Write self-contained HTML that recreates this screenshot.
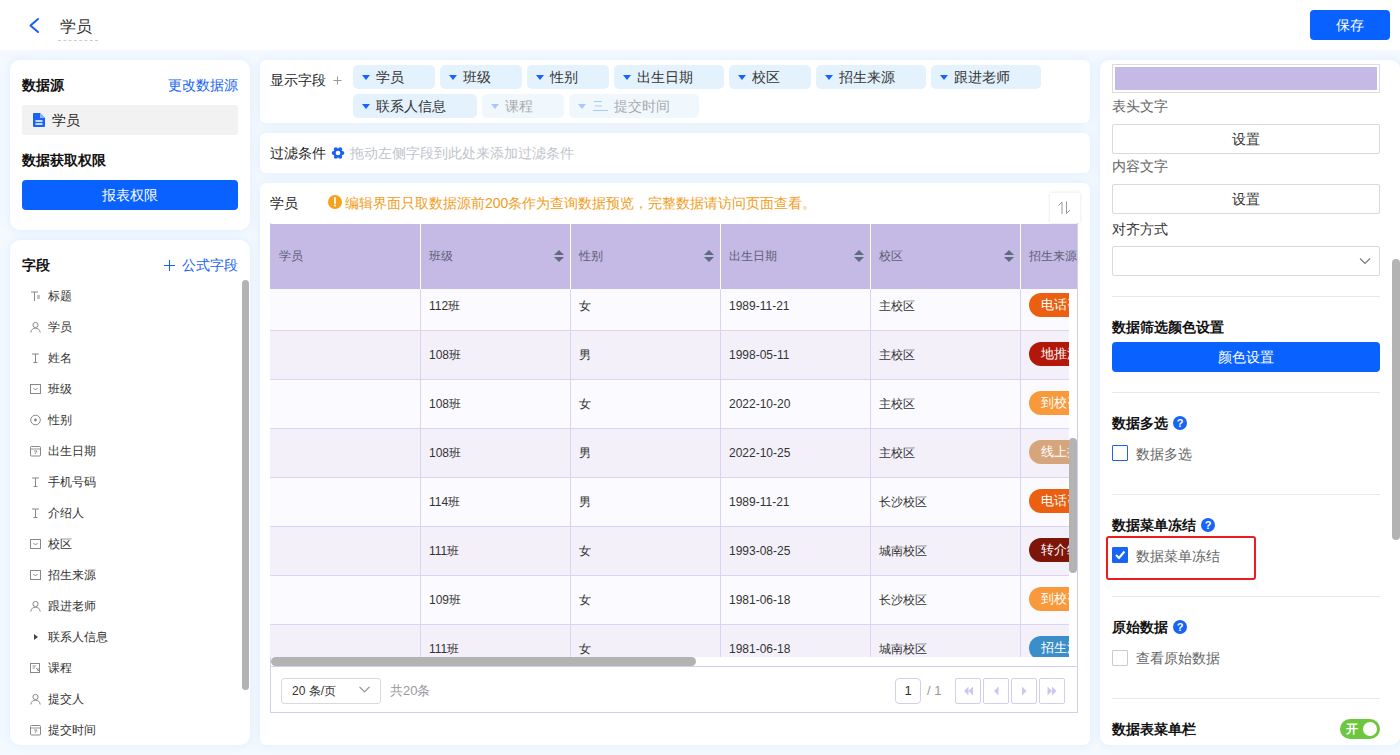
<!DOCTYPE html>
<html><head><meta charset="utf-8">
<style>
*{box-sizing:border-box;margin:0;padding:0}
html,body{width:1400px;height:755px;overflow:hidden}
body{font-family:"Liberation Sans",sans-serif;font-size:14px;color:#262626;background:#f3f9ff;position:relative}
.abs{position:absolute}
.hdr{left:0;top:0;width:1400px;height:50px;background:#fff}
.panel{position:absolute;background:#fff;border-radius:10px;box-shadow:0 0 8px rgba(200,223,250,.45)}
.t{position:absolute;white-space:nowrap;line-height:20px}
.b{font-weight:bold;color:#111}
.blue{color:#1763f3}
.btn{position:absolute;background:#0962ff;color:#fff;border-radius:4px;text-align:center}
.fl{font-size:12px;color:#333}
.tag{position:absolute;height:24px;background:#e4f2fd;border-radius:5px}
.tag span{position:absolute;left:23px;top:2px;line-height:20px;white-space:nowrap;color:#333}
.tag .tri{position:absolute;left:9px;top:10px;width:0;height:0;border-left:4.5px solid transparent;border-right:4.5px solid transparent;border-top:5px solid #1664ff}
.tag.fade{background:#f0f8fe}
.tag.fade span{color:#aaa}
.tag.fade .tri{border-top-color:#a9c8fb}
.row{position:absolute;left:0;width:799px;height:49px;border-bottom:1px solid #ddd3f1}
.cell{position:absolute;top:0;width:150px;height:48px;border-left:1px solid #ddd3f1;padding-left:8px;line-height:48px;font-size:12px;color:#333;white-space:nowrap}
.pill{display:inline-block;height:24px;line-height:24px;border-radius:12px;padding:0 12px;color:#fff;font-size:13px;vertical-align:middle;margin-top:-3px;white-space:nowrap}
.thead{position:absolute;width:807px;height:65px;background:#c5b9e6;overflow:hidden}
.th{position:absolute;top:0;width:150px;height:65px;border-left:1px solid #fff;padding-left:8px;line-height:65px;font-size:12px;color:#5a6072;white-space:nowrap}
.sort{position:absolute;right:6px;top:26px;width:10px;height:14px}
.sort:before{content:"";position:absolute;left:0;top:0;border-left:5px solid transparent;border-right:5px solid transparent;border-bottom:5px solid #5f6b80}
.sort:after{content:"";position:absolute;left:0;top:7px;border-left:5px solid transparent;border-right:5px solid transparent;border-top:5px solid #5f6b80}
.rl{position:absolute;left:1112px;line-height:20px;white-space:nowrap}
.obtn{position:absolute;left:1112px;width:268px;height:30px;border:1px solid #d9d9d9;border-radius:2px;text-align:center;line-height:28px;color:#333;background:#fff}
.div{position:absolute;left:1112px;width:268px;height:1px;background:#e8e8e8}
.q{position:absolute;width:14px;height:14px;border-radius:50%;background:#1764f5;color:#fff;font-size:11px;font-weight:bold;line-height:14px;text-align:center}
.cb{position:absolute;left:1112px;width:16px;height:16px;border:1px solid #1764f5;border-radius:1px;background:#fff}
</style></head>
<body>
<!-- header -->
<div class="abs hdr"></div>
<svg class="abs" style="left:27px;top:16px" width="14" height="19" viewBox="0 0 14 19"><path d="M11 3 L3.5 9.5 L11 16" fill="none" stroke="#1b5cf6" stroke-width="2" stroke-linecap="round" stroke-linejoin="round"/></svg>
<div class="t" style="left:60px;top:17px;font-size:16px;line-height:20px;color:#333">学员</div>
<div class="abs" style="left:58px;top:40px;width:40px;border-top:1px dashed #ccc"></div>
<div class="btn" style="left:1310px;top:10px;width:80px;height:30px;line-height:30px;font-size:14px">保存</div>

<!-- left panel 1 -->
<div class="panel" style="left:10px;top:60px;width:240px;height:170px"></div>
<div class="t b" style="left:22px;top:75px">数据源</div>
<div class="t blue" style="right:1162px;top:75px">更改数据源</div>
<div class="abs" style="left:22px;top:105px;width:216px;height:30px;background:#f2f2f2;border-radius:2px"></div>
<svg class="abs" style="left:33px;top:113px" width="12" height="14" viewBox="0 0 12 14"><path d="M0 1a1 1 0 0 1 1-1H7L12 5V13a1 1 0 0 1-1 1H1a1 1 0 0 1-1-1Z" fill="#1a63f5"/><path d="M7 0V5H12" fill="#8fb5fb"/><path d="M2.5 8H9.5M2.5 11H9.5" stroke="#fff" stroke-width="1.3"/></svg>
<div class="t" style="left:52px;top:110px">学员</div>
<div class="t b" style="left:22px;top:150px">数据获取权限</div>
<div class="btn" style="left:22px;top:180px;width:216px;height:30px;line-height:30px">报表权限</div>

<!-- left panel 2 -->
<div class="panel" style="left:10px;top:240px;width:240px;height:505px"></div>
<div class="t b" style="left:22px;top:255px">字段</div>
<div class="t blue" style="right:1162px;top:255px"><svg style="position:relative;top:1px;margin-right:7px" width="11" height="11" viewBox="0 0 11 11"><path d="M5.5 0V11M0 5.5H11" stroke="#1763f3" stroke-width="1.1"/></svg>公式字段</div>
<svg class="abs" style="left:30px;top:290px" width="12" height="12" viewBox="0 0 12 12"><path d="M1 2H8M4.5 2V11" stroke="#888" stroke-width="1" fill="none"/><path d="M7 6H10M7 8H10" stroke="#888" stroke-width="1"/></svg>
<div class="t fl" style="left:48px;top:286px">标题</div>
<svg class="abs" style="left:30px;top:321px" width="12" height="12" viewBox="0 0 12 12"><circle cx="5.5" cy="4" r="2.6" stroke="#888" stroke-width="1" fill="none"/><path d="M0.8 11.5C1.2 8.5 3 7.2 5.5 7.2S9.8 8.5 10.2 11.5" stroke="#888" stroke-width="1" fill="none"/></svg>
<div class="t fl" style="left:48px;top:317px">学员</div>
<svg class="abs" style="left:30px;top:352px" width="12" height="12" viewBox="0 0 12 12"><path d="M2 2H9M5.5 2V10.5M3.5 10.5H7.5" stroke="#888" stroke-width="1" fill="none"/></svg>
<div class="t fl" style="left:48px;top:348px">姓名</div>
<svg class="abs" style="left:30px;top:383px" width="12" height="12" viewBox="0 0 12 12"><rect x="0.5" y="1.5" width="10" height="9" stroke="#888" stroke-width="1" fill="none"/><path d="M3.5 5L5.5 7L7.5 5" stroke="#888" stroke-width="1" fill="none"/></svg>
<div class="t fl" style="left:48px;top:379px">班级</div>
<svg class="abs" style="left:30px;top:414px" width="12" height="12" viewBox="0 0 12 12"><circle cx="5.5" cy="6" r="4.8" stroke="#888" stroke-width="1" fill="none"/><circle cx="5.5" cy="6" r="1.4" fill="#888"/></svg>
<div class="t fl" style="left:48px;top:410px">性别</div>
<svg class="abs" style="left:30px;top:445px" width="12" height="12" viewBox="0 0 12 12"><rect x="0.5" y="1.5" width="10" height="9.5" rx="1" stroke="#888" stroke-width="1" fill="none"/><path d="M0.5 4H10.5M4 6H7L5 9" stroke="#888" stroke-width="0.9" fill="none"/></svg>
<div class="t fl" style="left:48px;top:441px">出生日期</div>
<svg class="abs" style="left:30px;top:476px" width="12" height="12" viewBox="0 0 12 12"><path d="M2 2H9M5.5 2V10.5M3.5 10.5H7.5" stroke="#888" stroke-width="1" fill="none"/></svg>
<div class="t fl" style="left:48px;top:472px">手机号码</div>
<svg class="abs" style="left:30px;top:507px" width="12" height="12" viewBox="0 0 12 12"><path d="M2 2H9M5.5 2V10.5M3.5 10.5H7.5" stroke="#888" stroke-width="1" fill="none"/></svg>
<div class="t fl" style="left:48px;top:503px">介绍人</div>
<svg class="abs" style="left:30px;top:538px" width="12" height="12" viewBox="0 0 12 12"><rect x="0.5" y="1.5" width="10" height="9" stroke="#888" stroke-width="1" fill="none"/><path d="M3.5 5L5.5 7L7.5 5" stroke="#888" stroke-width="1" fill="none"/></svg>
<div class="t fl" style="left:48px;top:534px">校区</div>
<svg class="abs" style="left:30px;top:569px" width="12" height="12" viewBox="0 0 12 12"><rect x="0.5" y="1.5" width="10" height="9" stroke="#888" stroke-width="1" fill="none"/><path d="M3.5 5L5.5 7L7.5 5" stroke="#888" stroke-width="1" fill="none"/></svg>
<div class="t fl" style="left:48px;top:565px">招生来源</div>
<svg class="abs" style="left:30px;top:600px" width="12" height="12" viewBox="0 0 12 12"><circle cx="5.5" cy="4" r="2.6" stroke="#888" stroke-width="1" fill="none"/><path d="M0.8 11.5C1.2 8.5 3 7.2 5.5 7.2S9.8 8.5 10.2 11.5" stroke="#888" stroke-width="1" fill="none"/></svg>
<div class="t fl" style="left:48px;top:596px">跟进老师</div>
<svg class="abs" style="left:30px;top:631px" width="12" height="12" viewBox="0 0 12 12"><path d="M4 3L8 6L4 9Z" fill="#444"/></svg>
<div class="t fl" style="left:48px;top:627px">联系人信息</div>
<svg class="abs" style="left:30px;top:662px" width="12" height="12" viewBox="0 0 12 12"><rect x="0.5" y="1.5" width="9" height="9" stroke="#888" stroke-width="1" fill="none"/><path d="M2.5 4H6M2.5 6H5M6 6L10 10M8 6V9" stroke="#888" stroke-width="0.9" fill="none"/></svg>
<div class="t fl" style="left:48px;top:658px">课程</div>
<svg class="abs" style="left:30px;top:693px" width="12" height="12" viewBox="0 0 12 12"><circle cx="5.5" cy="4" r="2.6" stroke="#888" stroke-width="1" fill="none"/><path d="M0.8 11.5C1.2 8.5 3 7.2 5.5 7.2S9.8 8.5 10.2 11.5" stroke="#888" stroke-width="1" fill="none"/></svg>
<div class="t fl" style="left:48px;top:689px">提交人</div>
<svg class="abs" style="left:30px;top:724px" width="12" height="12" viewBox="0 0 12 12"><rect x="0.5" y="1.5" width="10" height="9.5" rx="1" stroke="#888" stroke-width="1" fill="none"/><path d="M0.5 4H10.5M4 6H7L5 9" stroke="#888" stroke-width="0.9" fill="none"/></svg>
<div class="t fl" style="left:48px;top:720px">提交时间</div>
<div class="abs" style="left:242px;top:280px;width:7px;height:410px;background:#b3b3b3;border-radius:4px"></div>

<!-- middle panels -->
<div class="panel" style="left:260px;top:60px;width:830px;height:63px;border-radius:6px"></div>
<div class="t" style="left:270px;top:70px">显示字段</div>
<svg class="abs" style="left:333px;top:76px" width="9" height="9" viewBox="0 0 9 9"><path d="M4.5 0.5V8.5M0.5 4.5H8.5" stroke="#999" stroke-width="1"/></svg>
<div class="tag" style="left:353px;top:65px;width:82px"><i class="tri"></i><span>学员</span></div>
<div class="tag" style="left:440px;top:65px;width:82px"><i class="tri"></i><span>班级</span></div>
<div class="tag" style="left:527px;top:65px;width:82px"><i class="tri"></i><span>性别</span></div>
<div class="tag" style="left:614px;top:65px;width:110px"><i class="tri"></i><span>出生日期</span></div>
<div class="tag" style="left:729px;top:65px;width:82px"><i class="tri"></i><span>校区</span></div>
<div class="tag" style="left:816px;top:65px;width:110px"><i class="tri"></i><span>招生来源</span></div>
<div class="tag" style="left:931px;top:65px;width:110px"><i class="tri"></i><span>跟进老师</span></div>
<div class="tag" style="left:353px;top:94px;width:124px"><i class="tri"></i><span>联系人信息</span></div>
<div class="tag fade" style="left:482px;top:94px;width:82px"><i class="tri"></i><span>课程</span></div>
<div class="tag fade" style="left:569px;top:94px;width:130px"><i class="tri"></i><svg style="position:absolute;left:23px;top:6px" width="17" height="12" viewBox="0 0 17 12"><path d="M2 1.5H10M3 6H10M1 10.5H16" stroke="#a9c8fb" stroke-width="1.2"/></svg><span style="left:45px">提交时间</span></div>
<div class="panel" style="left:260px;top:133px;width:830px;height:40px;border-radius:6px"></div>
<div class="t" style="left:270px;top:143px">过滤条件</div>
<svg class="abs" style="left:331px;top:146px" width="14" height="14" viewBox="0 0 14 14"><g fill="#1a5ff6"><circle cx="11.30" cy="7.00" r="2"/><circle cx="9.15" cy="10.72" r="2"/><circle cx="4.85" cy="10.72" r="2"/><circle cx="2.70" cy="7.00" r="2"/><circle cx="4.85" cy="3.28" r="2"/><circle cx="9.15" cy="3.28" r="2"/><circle cx="7" cy="7" r="4.6"/></g><circle cx="7" cy="7" r="2.3" fill="#fff"/></svg>
<div class="t" style="left:350px;top:143px;color:#c0c4cc">拖动左侧字段到此处来添加过滤条件</div>
<div class="panel" style="left:260px;top:183px;width:830px;height:562px;border-radius:6px"></div>
<div class="t" style="left:270px;top:193px">学员</div>
<svg class="abs" style="left:328px;top:195px" width="14" height="14" viewBox="0 0 14 14"><circle cx="7" cy="7" r="7" fill="#f7a21b"/><path d="M7 3V8" stroke="#fff" stroke-width="1.8" stroke-linecap="round"/><circle cx="7" cy="10.6" r="1" fill="#fff"/></svg>
<div class="t" style="left:345px;top:193px;color:#f29d1c">编辑界面只取数据源前200条作为查询数据预览，完整数据请访问页面查看。</div>
<div class="abs" style="left:1050px;top:193px;width:30px;height:30px;background:#fff;box-shadow:0 0 3px rgba(0,0,0,.12)"></div>
<svg class="abs" style="left:1057px;top:200px" width="16" height="15" viewBox="0 0 16 15"><path d="M5 14V2L1.5 5.5M9.5 1.5V13.5L13 10" stroke="#999" stroke-width="1" fill="none"/></svg>
<div class="abs" style="left:270px;top:223px;width:808px;height:490px;border:1px solid #d6ccef;border-top:none"></div>
<div class="abs" style="left:270px;top:224px;width:799px;height:433px;overflow:hidden">
<div class="row" style="top:58px;background:#fbfafe">
<div class="cell" style="left:0px;border-left:none;"></div>
<div class="cell" style="left:150px;">112班</div>
<div class="cell" style="left:300px;">女</div>
<div class="cell" style="left:450px;">1989-11-21</div>
<div class="cell" style="left:600px;">主校区</div>
<div class="cell" style="left:750px;width:49px;overflow:hidden;padding-left:8px"><span class="pill" style="background:#ea6010">电话咨询</span></div>
</div>
<div class="row" style="top:107px;background:#f3f0fa">
<div class="cell" style="left:0px;border-left:none;"></div>
<div class="cell" style="left:150px;">108班</div>
<div class="cell" style="left:300px;">男</div>
<div class="cell" style="left:450px;">1998-05-11</div>
<div class="cell" style="left:600px;">主校区</div>
<div class="cell" style="left:750px;width:49px;overflow:hidden;padding-left:8px"><span class="pill" style="background:#b3170a">地推活动</span></div>
</div>
<div class="row" style="top:156px;background:#fbfafe">
<div class="cell" style="left:0px;border-left:none;"></div>
<div class="cell" style="left:150px;">108班</div>
<div class="cell" style="left:300px;">女</div>
<div class="cell" style="left:450px;">2022-10-20</div>
<div class="cell" style="left:600px;">主校区</div>
<div class="cell" style="left:750px;width:49px;overflow:hidden;padding-left:8px"><span class="pill" style="background:#f89a3c">到校咨询</span></div>
</div>
<div class="row" style="top:205px;background:#f3f0fa">
<div class="cell" style="left:0px;border-left:none;"></div>
<div class="cell" style="left:150px;">108班</div>
<div class="cell" style="left:300px;">男</div>
<div class="cell" style="left:450px;">2022-10-25</div>
<div class="cell" style="left:600px;">主校区</div>
<div class="cell" style="left:750px;width:49px;overflow:hidden;padding-left:8px"><span class="pill" style="background:#d6a57c">线上推广</span></div>
</div>
<div class="row" style="top:254px;background:#fbfafe">
<div class="cell" style="left:0px;border-left:none;"></div>
<div class="cell" style="left:150px;">114班</div>
<div class="cell" style="left:300px;">男</div>
<div class="cell" style="left:450px;">1989-11-21</div>
<div class="cell" style="left:600px;">长沙校区</div>
<div class="cell" style="left:750px;width:49px;overflow:hidden;padding-left:8px"><span class="pill" style="background:#ea6010">电话咨询</span></div>
</div>
<div class="row" style="top:303px;background:#f3f0fa">
<div class="cell" style="left:0px;border-left:none;"></div>
<div class="cell" style="left:150px;">111班</div>
<div class="cell" style="left:300px;">女</div>
<div class="cell" style="left:450px;">1993-08-25</div>
<div class="cell" style="left:600px;">城南校区</div>
<div class="cell" style="left:750px;width:49px;overflow:hidden;padding-left:8px"><span class="pill" style="background:#7d1508">转介绍</span></div>
</div>
<div class="row" style="top:352px;background:#fbfafe">
<div class="cell" style="left:0px;border-left:none;"></div>
<div class="cell" style="left:150px;">109班</div>
<div class="cell" style="left:300px;">女</div>
<div class="cell" style="left:450px;">1981-06-18</div>
<div class="cell" style="left:600px;">长沙校区</div>
<div class="cell" style="left:750px;width:49px;overflow:hidden;padding-left:8px"><span class="pill" style="background:#f89a3c">到校咨询</span></div>
</div>
<div class="row" style="top:401px;background:#f3f0fa">
<div class="cell" style="left:0px;border-left:none;"></div>
<div class="cell" style="left:150px;">111班</div>
<div class="cell" style="left:300px;">女</div>
<div class="cell" style="left:450px;">1981-06-18</div>
<div class="cell" style="left:600px;">城南校区</div>
<div class="cell" style="left:750px;width:49px;overflow:hidden;padding-left:8px"><span class="pill" style="background:#3b8ec8">招生活动</span></div>
</div>
</div>
<div class="abs thead" style="left:270px;top:224px">
<div class="th" style="left:0px;border-left:none;padding-left:9px;">学员</div>
<div class="th" style="left:150px;">班级<i class="sort"></i></div>
<div class="th" style="left:300px;">性别<i class="sort"></i></div>
<div class="th" style="left:450px;">出生日期<i class="sort"></i></div>
<div class="th" style="left:600px;">校区<i class="sort"></i></div>
<div class="th" style="left:750px;width:57px;overflow:hidden;">招生来源</div>
</div>
<div class="abs" style="left:271px;top:657px;width:425px;height:9px;background:#b3b3b3;border-radius:5px"></div>
<div class="abs" style="left:1069px;top:438px;width:8px;height:135px;background:#b3b3b3;border-radius:4px"></div>
<div class="abs" style="left:270px;top:666px;width:808px;height:1px;background:#d6ccef"></div>
<div class="abs" style="left:281px;top:678px;width:100px;height:26px;border:1px solid #d9d9d9;border-radius:3px"></div>
<div class="t" style="left:292px;top:681px;font-size:12px;color:#333">20 条/页</div>
<svg class="abs" style="left:359px;top:686px" width="11" height="7" viewBox="0 0 11 7"><path d="M0.5 0.8L5.5 5.8 10.5 0.8" stroke="#888" stroke-width="1.1" fill="none"/></svg>
<div class="t" style="left:390px;top:681px;font-size:13px;color:#999">共20条</div>
<div class="abs" style="left:895px;top:678px;width:26px;height:26px;border:1px solid #d6ccef;border-radius:4px;text-align:center;line-height:24px;font-size:13px;color:#333">1</div>
<div class="t" style="left:927px;top:681px;font-size:13px;color:#999">/ 1</div>
<div class="abs" style="left:955px;top:678px;width:26px;height:26px;border:1px solid #d6ccef;border-radius:2px"><svg style="position:absolute;left:5px;top:5px" width="14" height="14" viewBox="0 0 14 14"><path d="M7.5 2.5L3 7 7.5 11.5ZM12 2.5L7.5 7 12 11.5Z" fill="#cfc5ef"/></svg></div>
<div class="abs" style="left:983px;top:678px;width:26px;height:26px;border:1px solid #d6ccef;border-radius:2px"><svg style="position:absolute;left:5px;top:5px" width="14" height="14" viewBox="0 0 14 14"><path d="M9.5 2.5L5 7 9.5 11.5Z" fill="#cfc5ef"/></svg></div>
<div class="abs" style="left:1011px;top:678px;width:26px;height:26px;border:1px solid #d6ccef;border-radius:2px"><svg style="position:absolute;left:5px;top:5px" width="14" height="14" viewBox="0 0 14 14"><path d="M5 2.5L9.5 7 5 11.5Z" fill="#cfc5ef"/></svg></div>
<div class="abs" style="left:1039px;top:678px;width:26px;height:26px;border:1px solid #d6ccef;border-radius:2px"><svg style="position:absolute;left:5px;top:5px" width="14" height="14" viewBox="0 0 14 14"><path d="M2.5 2.5L7 7 2.5 11.5ZM7 2.5L11.5 7 7 11.5Z" fill="#cfc5ef"/></svg></div>

<!-- right panel -->
<div class="panel" style="left:1100px;top:60px;width:300px;height:685px;border-radius:9px"></div>
<div class="abs" style="left:1112px;top:64px;width:268px;height:29px;border:1px solid #dcdcdc;padding:2px;background:#fff"><div style="width:100%;height:100%;background:#c5b9e6"></div></div>
<div class="rl" style="top:96px;color:#666">表头文字</div>
<div class="obtn" style="top:124px">设置</div>
<div class="rl" style="top:156px;color:#666">内容文字</div>
<div class="obtn" style="top:184px">设置</div>
<div class="rl" style="top:219px;color:#333">对齐方式</div>
<div class="obtn" style="top:246px"></div>
<svg class="abs" style="left:1359px;top:257px" width="12" height="8" viewBox="0 0 12 8"><path d="M1 1.5L6 6.5 11 1.5" stroke="#777" stroke-width="1.1" fill="none"/></svg>
<div class="div" style="top:296px"></div>
<div class="rl b" style="top:317px">数据筛选颜色设置</div>
<div class="btn" style="left:1112px;top:342px;width:268px;height:30px;line-height:30px">颜色设置</div>
<div class="div" style="top:392px"></div>
<div class="rl b" style="top:413px">数据多选</div>
<div class="q" style="left:1173px;top:416px">?</div>
<div class="cb" style="top:445px"></div>
<div class="rl" style="left:1136px;top:444px;color:#666">数据多选</div>
<div class="div" style="top:494px"></div>
<div class="rl b" style="top:515px">数据菜单冻结</div>
<div class="q" style="left:1201px;top:518px">?</div>
<div class="abs" style="left:1106px;top:536px;width:150px;height:44px;border:2px solid #ee1c1c;border-radius:3px"></div>
<div class="cb" style="top:547px;background:#1764f5"><svg style="position:absolute;left:1px;top:1px" width="12" height="12" viewBox="0 0 12 12"><path d="M2 6L5 9 10.5 2.5" stroke="#fff" stroke-width="2" fill="none"/></svg></div>
<div class="rl" style="left:1136px;top:546px;color:#666">数据菜单冻结</div>
<div class="div" style="top:596px"></div>
<div class="rl b" style="top:617px">原始数据</div>
<div class="q" style="left:1173px;top:620px">?</div>
<div class="cb" style="top:650px;border-color:#ccc"></div>
<div class="rl" style="left:1136px;top:648px;color:#666">查看原始数据</div>
<div class="div" style="top:698px"></div>
<div class="rl b" style="top:719px">数据表菜单栏</div>
<div class="abs" style="left:1340px;top:719px;width:40px;height:20px;border-radius:10px;background:#6cc63e"><span style="position:absolute;left:6px;top:1px;color:#fff;font-size:12px;line-height:18px;font-weight:bold">开</span><i style="position:absolute;right:3px;top:3px;width:14px;height:14px;border-radius:50%;background:#fff"></i></div>
<div class="abs" style="left:1392px;top:259px;width:8px;height:281px;background:#b3b3b3;border-radius:4px"></div>
</body></html>
